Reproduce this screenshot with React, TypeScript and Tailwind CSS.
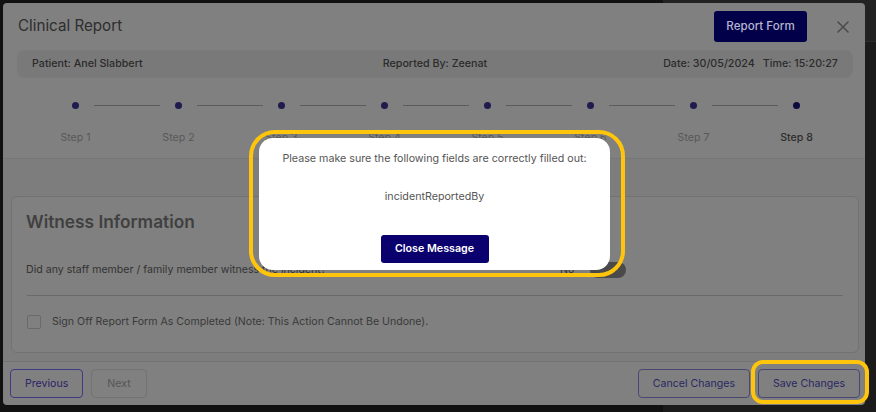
import React from "react";

const steps = ["Step 1", "Step 2", "Step 3", "Step 4", "Step 5", "Step 6", "Step 7", "Step 8"];

function CloseIcon() {
  return (
    <svg width="12" height="12" viewBox="0 0 12 12" fill="none">
      <path d="M1 1L11 11M11 1L1 11" stroke="#4a4a4a" strokeWidth="1.5" strokeLinecap="round" />
    </svg>
  );
}

function Stepper() {
  return (
    <div className="border-b border-[#777777] pb-[13px]">
      <div className="flex items-center pl-[69px] mt-[24px]">
        {steps.map((s, i) => (
          <React.Fragment key={s}>
            <span
              className={
                i === steps.length - 1
                  ? "w-[7px] h-[7px] rounded-full bg-[#0d0b3d]"
                  : "w-[7px] h-[7px] rounded-full bg-[#1f1b4d]"
              }
            />
            {i < steps.length - 1 && <span className="w-[66px] h-px mx-[15px] bg-[#5c5c5c]" />}
          </React.Fragment>
        ))}
      </div>
      <div className="flex pl-[21px] mt-[22px]">
        {steps.map((s, i) => (
          <div
            key={s}
            className={
              i === steps.length - 1
                ? "w-[103px] text-center text-[10.6px] leading-[14px] font-medium text-[#2e2e2e]"
                : "w-[103px] text-center text-[10.6px] leading-[14px] text-[#585858]"
            }
          >
            {s}
          </div>
        ))}
      </div>
    </div>
  );
}

function WitnessCard() {
  return (
    <div className="h-[157px] rounded-[6px] border border-[#727272] bg-[#808080] px-[14px] pt-[13px]">
      <h2 className="text-[17.3px] leading-[24px] font-semibold text-[#404040]">Witness Information</h2>
      <div className="flex items-center mt-[28px] h-[16px]">
        <p className="w-[534px] text-[10.6px] text-[#333333]">
          Did any staff member / family member witness the incident?
        </p>
        <span className="text-[10.6px] text-[#333333]">No</span>
        <span className="ml-[16px] w-[36px] h-[16px] rounded-full bg-[#4a4a4a]" />
      </div>
      <div className="mt-[17px] ml-px mr-px h-px bg-[#6a6a6a]" />
      <label className="flex items-center gap-[11px] mt-[18px] pl-px">
        <span className="w-[14px] h-[14px] rounded-[2px] border border-[#6a6a6a]" />
        <span className="text-[10.6px] text-[#3a3a3a]">
          Sign Off Report Form As Completed (Note: This Action Cannot Be Undone).
        </span>
      </label>
    </div>
  );
}

function Footer() {
  return (
    <div className="flex items-center border-t border-[#737373] pl-[7px] pr-[5px] pt-[7px] pb-[7px]">
      <div className="flex gap-[8px]">
        <button className="h-[29px] px-[14px] rounded-[4px] border border-[#403a85] text-[10.6px] text-[#2a2366]">
          Previous
        </button>
        <button className="h-[29px] px-[15px] rounded-[4px] border border-[#737373] text-[10.6px] text-[#555555]">
          Next
        </button>
      </div>
      <div className="ml-auto flex gap-[8px]">
        <button className="h-[29px] px-[14px] rounded-[4px] border border-[#4a4772] text-[10.6px] text-[#2a2860]">
          Cancel Changes
        </button>
        <button className="h-[29px] px-[14px] rounded-[4px] border border-[#4a4772] text-[10.6px] text-[#2a2860]">
          Save Changes
        </button>
      </div>
    </div>
  );
}

export default function App() {
  return (
    <div className="relative w-[876px] h-[412px] overflow-hidden flex font-[Inter,sans-serif]">
      {/* page behind the dimmed dialog */}
      <div className="w-[663px] bg-[#111111]" />
      <div className="flex-1 bg-[#1b1b1b]">
        <div className="h-[42px] bg-[#222222] border-b border-[#2c2c2c]" />
      </div>

      {/* dialog */}
      <div className="absolute left-[3px] top-[3px] w-[862px] h-[402px] rounded-[4px] bg-[#808080] flex flex-col overflow-hidden">
        <div className="flex items-center h-[31px] mt-[8px] pl-[15px] pr-[16px]">
          <h1 className="flex-1 text-[15.2px] text-[#2e2e2e]">Clinical Report</h1>
          <button className="w-[93px] h-[31px] rounded-[3px] bg-[#03004a] text-[11.6px] font-medium text-[#b6b6cf]">
            Report Form
          </button>
          <span className="ml-[30px]">
            <CloseIcon />
          </span>
        </div>

        <div className="grid grid-cols-3 items-center h-[28px] mt-[8px] ml-[14px] mr-[12px] px-[15px] rounded-[8px] bg-[#797979] text-[10.7px] font-medium text-[#2b2b2b]">
          <span>Patient: Anel Slabbert</span>
          <span className="text-center">Reported By: Zeenat</span>
          <span className="flex justify-end gap-[8px]">
            <span>Date: 30/05/2024</span>
            <span>Time: 15:20:27</span>
          </span>
        </div>

        <Stepper />

        <div className="flex-1 bg-[#7d7d7d] pt-[37px] pl-[8px] pr-[6px]">
          <WitnessCard />
        </div>

        <Footer />
      </div>

      {/* validation message */}
      <div className="absolute left-[259px] top-[138px] w-[351px] h-[132px] rounded-[14px] bg-white flex flex-col items-center pt-[14px]">
        <p className="text-[10.7px] leading-[14px] text-[#555555]">
          Please make sure the following fields are correctly filled out:
        </p>
        <p className="mt-[24px] text-[10.7px] leading-[14px] text-[#555555]">incidentReportedBy</p>
        <button className="mt-[31px] w-[108px] h-[28px] rounded-[3px] bg-[#0a006e] text-[10.7px] font-semibold text-white">
          Close Message
        </button>
      </div>

      {/* highlight marks */}
      <div className="absolute left-[249px] top-[130px] w-[376px] h-[147px] rounded-[26px] border-[4px] border-[#ffc40c] pointer-events-none" />
      <div className="absolute left-[751px] top-[360px] w-[118px] h-[44px] rounded-[12px] border-[4px] border-[#ffc40c] pointer-events-none" />
    </div>
  );
}
